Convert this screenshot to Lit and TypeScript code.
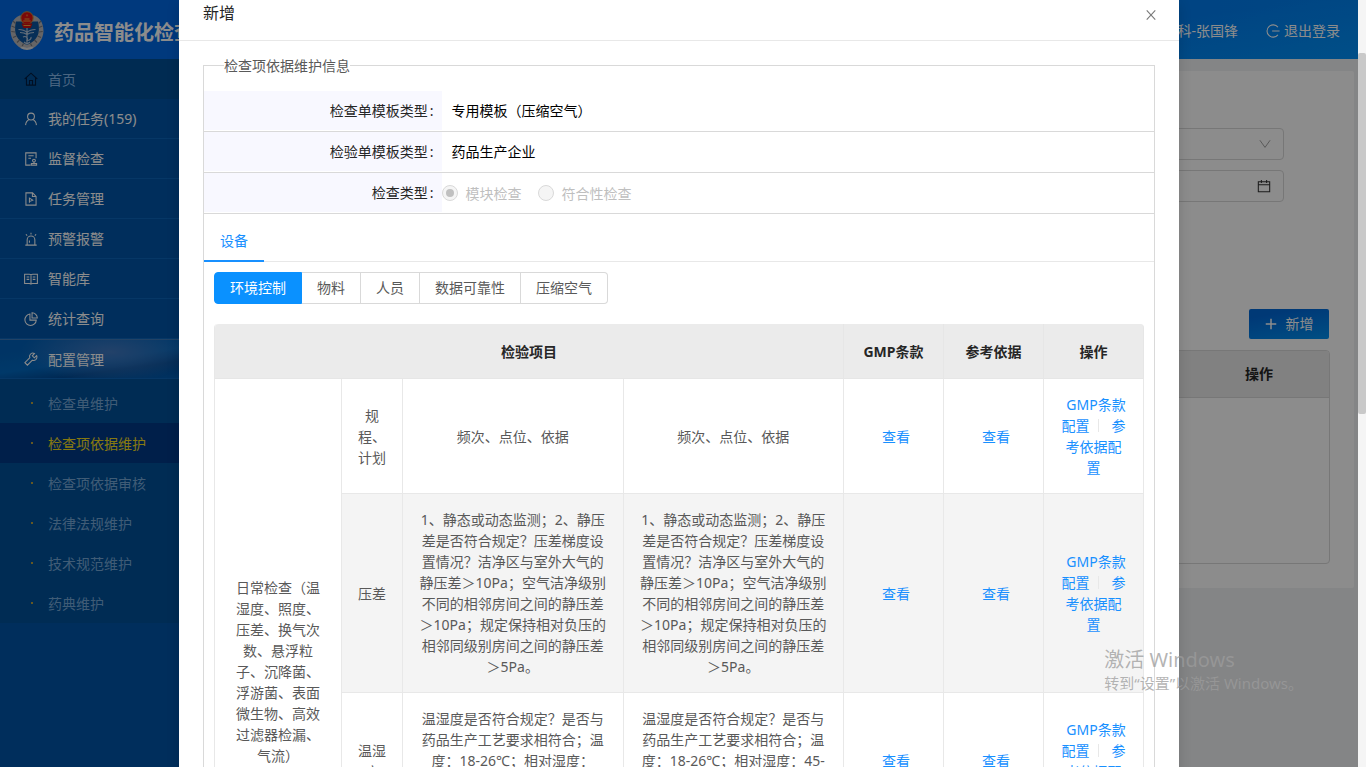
import { LitElement, html, css, svg, nothing } from "lit";
import { customElement, property, state } from "lit/decorators.js";
import { classMap } from "lit/directives/class-map.js";

const ICONS: Record<string, unknown> = {
  home: svg`<path d="M.8 8 8 1.400 15.200 8M2.800 6.500V15h10.400V6.500M6.300 14.800V9.600h3.400v5.200"/>`,
  user: svg`<circle cx="8" cy="5.200" r="3.900"/><path d="M1.800 15c.3-3.400 2-5.500 4.200-6.400M14.200 15c-.3-3.400-2-5.500-4.200-6.400"/>`,
  audit: svg`<path d="M7.500 15H2V1h11.800V7M5 4.300h6M5 7.200h3M8.400 15h6v-1.900h-6z"/><circle cx="11.400" cy="9.800" r="1.600"/><path d="M11.400 11.400v1.600"/>`,
  pdf: svg`<path d="M2.200 1h7.600l4 4v10H2.200zM9.600 1.200v4h4M6.200 12.400V7l3.800 2.300-3.800 1.700"/>`,
  alert: svg`<path d="M1.500 15h13M3.600 14.800V9a4.400 4.400 0 0 1 8.800 0v5.800M6.200 12.400V9.800M8 .8v2M2.200 2.600l1.400 1.600M13.800 2.600l-1.400 1.600"/>`,
  book: svg`<path d="M.7 2.600h5.400c1.100 0 1.900.6 1.900 1.200 0-.6.8-1.200 1.900-1.200h5.400v10.600H9.900c-1.100 0-1.900.4-1.900 1 0-.6-.8-1-1.900-1H.7zM8 4v9.800M3 5.600h3M3 8.400h3M10 5.600h3M10 8.400h3"/>`,
  pie: svg`<path d="M6.800 2.400A6.500 6.500 0 1 0 14 9.300H6.800z"/><path d="M9.200.9v6h6a6.100 6.100 0 0 0-6-6z"/>`,
  tool: svg`<path d="M14.400 4.100 11.800 6.600 9.500 4.300 12 1.700C10.300.8 8.200 1.200 7.100 2.800c-.8 1.100-.9 2.500-.4 3.700L1 12.200l2.900 2.900 5.700-5.700c1.400.5 2.800.2 3.900-.8 1.200-1.200 1.600-3 .9-4.500z"/>`,
  logout: svg`<path d="M13.600 3.600A7 7 0 1 0 13.600 12.400M7 8h8.500"/>`,
  calendar: svg`<path d="M1.500 3.200h13v11.300h-13zM1.500 6.600h13M5 1v3.600M11 1v3.600"/>`,
  down: svg`<path d="m1.200 3 6.800 9.500L14.800 3"/>`,
  close: svg`<path stroke-width="1.500" d="m2.300 1.800 11.400 12.400M13.700 1.800 2.300 14.200"/>`,
  plus: svg`<path stroke-width="2" d="M8 1v14M1 8h14"/>`,
};

const icon = (name: string, size = 14) => html`<svg
  class="icon"
  width=${size}
  height=${size}
  viewBox="0 0 16 16"
  aria-hidden="true"
>${ICONS[name]}</svg>`;

const shared = css`
  * { box-sizing: border-box; }
  button { font: inherit; cursor: pointer; }
  a { text-decoration: none; }
  .icon { fill: none; stroke: currentColor; stroke-width: 1.2; flex: none; display: block; }
`;

const MENU = [
  { icon: "user", text: "我的任务(159)" },
  { icon: "audit", text: "监督检查" },
  { icon: "pdf", text: "任务管理" },
  { icon: "alert", text: "预警报警" },
  { icon: "book", text: "智能库" },
  { icon: "pie", text: "统计查询" },
  { icon: "tool", text: "配置管理", open: true },
];

const SUBMENU = ["检查单维护", "检查项依据维护", "检查项依据审核", "法律法规维护", "技术规范维护", "药典维护"];

@customElement("side-menu")
class SideMenu extends LitElement {
  static styles = [shared, css`
    :host { display: block; background: #0055a8; color: #fff; }
    .item {
      display: flex; align-items: center; gap: 10px; height: 40px; padding: 0 24px;
      color: #fff; border-bottom: 1px solid #0b65ba;
    }
    .home { background: #004f96; color: #86b8ea; border-bottom: 0; }
    .home .icon { color: #001c40; }
    .open {
      border-top: 1px solid #3c78b8;
      background: radial-gradient(ellipse 90px 30px at 110px 12px, #4078c0, transparent),
        linear-gradient(172deg, #0060b8 20%, #0068c0 50%, #004b98 70%, #0060b8);
    }
    .sub { background: #00509a; padding-top: 4px; }
    .leaf { display: flex; align-items: center; height: 40px; padding-left: 31px; color: #76a8d8; gap: 15px; }
    .leaf::before { content: ""; width: 2px; height: 2px; background: #b8a040; }
    .current { background: #003a88; color: #f5dc20; }
  `];

  render() {
    return html`
      <nav>
        <a class="item home" href="#">${icon("home")}<span>首页</span></a>
        ${MENU.map((m) => html`
          <a class=${classMap({ item: true, open: !!m.open })} href="#">${icon(m.icon)}<span>${m.text}</span></a>
        `)}
        <div class="sub">
          ${SUBMENU.map((text, i) => html`<a class=${classMap({ leaf: true, current: i === 1 })} href="#">${text}</a>`)}
        </div>
      </nav>
    `;
  }
}

@customElement("brand-emblem")
class BrandEmblem extends LitElement {
  static styles = css`
    :host { display: block; flex: none; line-height: 0; }
  `;

  render() {
    return html`
      <svg width="34" height="40" viewBox="0 0 34 40" aria-hidden="true">
        <path d="M9.500 4.500C3 7.500.5 13 .5 20.500 1 29 6.500 35.500 13 38l4-1.200 4 1.200c6.500-2.500 12-9 12.500-17.500 0-7.500-2.500-13-9-16z" fill="#b9b9bc"/>
        <path d="M6 10.500C5 14.500 4.700 18.500 5.600 22.500 7.200 28 11.500 31.800 17 34c5.500-2.200 9.800-6 11.400-11.500.9-4 .6-8-.4-12z" fill="#0b559f"/>
        <path d="M3 10 5.500 12.500M1.500 15l3.500 1.500M1.300 20.500l3.700.5M3 26.500l3.400-1.500M7 31.500l2.600-2.500M12 35.500l1.500-3M31 10l-2.500 2.500M32.500 15 29 16.500M32.700 20.500l-3.700.5M31 26.500l-3.400-1.500M27 31.500 24.400 29M22 35.500l-1.500-3" stroke="#77797f" stroke-width="1.200"/>
        <path d="M17 16v16.500M8.500 18.500c3 0 6.500 1 8.500 3 2-2 5.500-3 8.500-3M10 21.500c2.500 0 5 .5 7 2 2-1.500 4.500-2 7-2M13 26c3-1.500 5.500 1 4 3.500 2.500 0 4.500-1.500 4-3.500M14 31l3 2 3-2" fill="none" stroke="#b4c6dc" stroke-width="1.200"/>
        <path d="M12 35.500c3 1.500 7 1.500 10 0l1.500 1.500c-4 2.600-9 2.600-13 0z" fill="#dedede"/>
        <ellipse cx="17" cy="7" rx="6.200" ry="6.300" fill="#e01210" stroke="#c89038"/>
        <path d="M11.500 12.500h11l-1.800 4.500h-7.400z" fill="#d0120f"/>
        <path d="M13.300 10h7.400M14.500 8h5M17 3.500v1.800M13.500 14.500h7" stroke="#f2a53c"/>
      </svg>
    `;
  }
}

const CHECK_PRESSURE =
  "1、静态或动态监测；2、静压差是否符合规定？压差梯度设置情况？洁净区与室外大气的静压差＞10Pa；空气洁净级别不同的相邻房间之间的静压差＞10Pa；规定保持相对负压的相邻同级别房间之间的静压差＞5Pa。";
const CHECK_CLIMATE = "温湿度是否符合规定？是否与药品生产工艺要求相符合；温度：18-26℃；相对湿度：";
const CHECK_CLIMATE_END = "65%；特殊要求的房间按照工艺规定执行。";
const CHECK_LIGHT = "照度是否符合规定？主要工作室的照度是否达到要求；对照度有特殊要求的生产区域是否设置局部照明；是否设置应急照明设施。";

const ROWS: { name: string; left: unknown; right: unknown }[] = [
  { name: "规程、计划", left: "频次、点位、依据", right: "频次、点位、依据" },
  { name: "压差", left: CHECK_PRESSURE, right: CHECK_PRESSURE },
  {
    name: "温湿度",
    left: html`${CHECK_CLIMATE}<br>45-${CHECK_CLIMATE_END}`,
    right: html`${CHECK_CLIMATE}45-<br>${CHECK_CLIMATE_END}`,
  },
  { name: "照度", left: CHECK_LIGHT, right: CHECK_LIGHT },
];

@customElement("item-table")
class ItemTable extends LitElement {
  static styles = [shared, css`
    :host { display: block; }
    table {
      width: 100%; table-layout: fixed; border-collapse: separate; border-spacing: 0;
      border-left: 1px solid #e8e8e8; border-radius: 4px 4px 0 0; text-align: center; color: #595959;
    }
    .c-group { width: 127px; }
    .c-name { width: 61px; }
    .c-act { width: 100px; }
    th, td { border-right: 1px solid #e8e8e8; border-bottom: 1px solid #e8e8e8; padding: 15px 16px; }
    th {
      height: 55px; background: #ebebeb; color: #262626; font-weight: 700; padding: 0 16px;
      border-color: #e6e6e6;
    }
    th:first-child { border-top-left-radius: 4px; }
    th:last-child { border-top-right-radius: 4px; }
    .alt { background: #f4f4f4; }
    .link { color: #1890ff; margin-left: 5px; }
    .split { display: inline-block; width: 1px; height: 13px; margin: 0 8px; background: #e8e8e8; vertical-align: -1px; }
  `];

  render() {
    return html`
      <table>
        <colgroup>
          <col class="c-group"><col class="c-name"><col><col>
          <col class="c-act"><col class="c-act"><col class="c-act">
        </colgroup>
        <thead>
          <tr><th colspan="4">检验项目</th><th>GMP条款</th><th>参考依据</th><th>操作</th></tr>
        </thead>
        <tbody>
          ${ROWS.map((r, i) => {
            const cell = classMap({ alt: i % 2 === 1 });
            return html`
              <tr>
                ${i === 0
                  ? html`<td rowspan=${ROWS.length}>日常检查（温湿度、照度、压差、换气次数、悬浮粒子、沉降菌、浮游菌、表面微生物、高效过滤器检漏、气流）</td>`
                  : nothing}
                <td class=${cell}>${r.name}</td>
                <td class=${cell}>${r.left}</td>
                <td class=${cell}>${r.right}</td>
                <td class=${cell}><a class="link" href="#">查看</a></td>
                <td class=${cell}><a class="link" href="#">查看</a></td>
                <td class=${cell}><a class="link" href="#">GMP条款配置</a><span class="split"></span><a class="link" href="#">参考依据配置</a></td>
              </tr>
            `;
          })}
        </tbody>
      </table>
    `;
  }
}

@customElement("item-dialog")
class ItemDialog extends LitElement {
  @state() private section = 0;

  static styles = [shared, css`
    :host {
      display: block; background: #fff; color: #595959;
      box-shadow: 0 4px 12px rgba(0, 0, 0, 0.15);
    }
    header {
      display: flex; align-items: flex-start; justify-content: space-between;
      padding: 2px 22px 16px 24px; border-bottom: 1px solid #e8e8e8;
    }
    h2 { margin: 0; font-size: 16px; line-height: 22px; font-weight: 400; color: #262626; }
    .close { border: 0; background: none; padding: 7px 0 0; color: #7a7a7a; }
    .body { padding: 14px 24px 24px; }
    fieldset { margin: 0; padding: 0; border: 1px solid #d9d9d9; min-width: 0; }
    legend { margin: 0 0 15px 20px; padding: 0; line-height: 21px; }
    .row { display: flex; height: 41px; border-bottom: 1px solid #d9d9d9; align-items: stretch; }
    .label {
      width: 25%; background: #f8f8ff; color: #262626; display: flex; align-items: center;
      justify-content: flex-end; padding-right: 8px; gap: 2px; margin-bottom: 1px;
    }
    .value { display: flex; align-items: center; padding-left: 10px; color: #000; margin-bottom: 1px; }
    .radios { display: flex; align-items: center; gap: 16px; color: #bfbfbf; }
    .radio { display: flex; align-items: center; gap: 8px; }
    input {
      appearance: none; width: 16px; height: 16px; margin: 0; border: 1px solid #d9d9d9;
      border-radius: 50%; background: #f5f5f5; display: grid; place-items: center;
    }
    input:checked::before { content: ""; width: 8px; height: 8px; border-radius: 50%; background: #c0c0c0; }
    .tabs { display: flex; height: 48px; border-bottom: 1px solid #e8e8e8; }
    .tab {
      border: 0; border-bottom: 2px solid #1890ff; background: none; color: #1890ff;
      padding: 6px 16px 0; height: 48px;
    }
    .pane { padding: 10px; }
    .segments { display: flex; margin-bottom: 20px; }
    .segment {
      height: 32px; padding: 0 15px 2px; border: 1px solid #d9d9d9; border-left-width: 0;
      background: #fff; color: #595959;
    }
    .segment:first-child { border-left-width: 1px; border-radius: 4px 0 0 4px; }
    .segment:last-child { border-radius: 0 4px 4px 0; }
    .active { background: #0a91ff; border-color: #0a91ff; color: #fff; }
  `];

  render() {
    const sections = ["环境控制", "物料", "人员", "数据可靠性", "压缩空气"];
    return html`
      <header>
        <h2>新增</h2>
        <button class="close" aria-label="关闭">${icon("close", 12)}</button>
      </header>
      <div class="body">
        <fieldset>
          <legend>检查项依据维护信息</legend>
          <div class="row"><span class="label">检查单模板类型<span>:</span></span><span class="value">专用模板（压缩空气）</span></div>
          <div class="row"><span class="label">检验单模板类型<span>:</span></span><span class="value">药品生产企业</span></div>
          <div class="row">
            <span class="label" id="kind">检查类型<span>:</span></span>
            <div class="radios" role="radiogroup" aria-labelledby="kind">
              <label class="radio"><input type="radio" name="kind" checked disabled>模块检查</label>
              <label class="radio"><input type="radio" name="kind" disabled>符合性检查</label>
            </div>
          </div>
          <div class="tabs" role="tablist"><button class="tab" role="tab" aria-selected="true">设备</button></div>
          <div class="pane">
            <div class="segments">
              ${sections.map((s, i) => html`
                <button
                  class=${classMap({ segment: true, active: i === this.section })}
                  @click=${() => (this.section = i)}
                >${s}</button>
              `)}
            </div>
            <item-table></item-table>
          </div>
        </fieldset>
      </div>
    `;
  }
}

@customElement("app-root")
class AppRoot extends LitElement {
  @property() userName = "药品检查科-张国锋";

  static styles = [shared, css`
    :host {
      display: flex; height: 100vh; overflow: hidden; position: relative;
      font: 14px/21px "Noto Sans", "Noto Sans CJK SC", sans-serif; text-spacing-trim: space-all;
    }
    .page { flex: 1; min-width: 0; display: flex; flex-direction: column; background: #f0f2f5; }
    .top {
      display: flex; align-items: center; gap: 10px; height: 59px; flex: none; padding: 2px 18px 0 10px; color: #fff;
      background: linear-gradient(170deg, transparent 60%, rgba(0, 160, 255, 0.5)) right / 50% 100% no-repeat,
        linear-gradient(90deg, #0068e4 15%, #0080f0);
    }
    .brand { margin: 0; font-size: 20px; line-height: 28px; font-weight: 700; flex: 1; padding-top: 4px; }
    .logout { display: flex; align-items: center; gap: 4px; color: #fff; border: 0; background: none; padding: 0; margin-left: 18px; }
    .main { flex: 1; min-height: 0; display: flex; }
    side-menu { width: 200px; flex: none; }
    .content { flex: 1; min-width: 0; padding: 12px 4px 0 12px; }
    .panel {
      background: #fff; border-radius: 2px; padding: 57px 24px 24px;
      display: flex; flex-direction: column;
    }
    .filters { display: grid; gap: 10px; justify-items: end; padding-right: 46px; margin-bottom: 107px; }
    .field {
      width: 300px; height: 32px; border: 1px solid #d9d9d9; border-radius: 4px; background: #fff;
      display: flex; align-items: center; padding-right: 12px;
    }
    .field select, .field input {
      flex: 1; min-width: 0; border: 0; background: none; appearance: none; font: inherit; padding: 0 11px; color: #595959;
    }
    .arrow { color: #999; display: flex; }
    .date { color: #333; display: flex; }
    .add {
      align-self: flex-end; display: flex; align-items: center; justify-content: center; gap: 9px;
      width: 80px; height: 30px; border: 0; border-radius: 2px; color: #fff; margin: 0 1px 11px 0;
      background: linear-gradient(170deg, #0068d8 20%, #0090f0); padding: 0 0 1px;
    }
    .list { height: 214px; border: 1px solid #d9d9d9; border-radius: 4px; overflow: hidden; }
    .list table { width: 100%; border-collapse: collapse; }
    .list th { background: #ebebeb; height: 46px; padding: 0; color: #262626; border-bottom: 1px solid #d9d9d9; }
    .list .c-op { width: 140px; }
    .mask {
      position: absolute; inset: 0 8px 0 0; background: rgba(0, 0, 0, 0.45);
      overflow: hidden; display: flex; justify-content: center; align-items: flex-start;
    }
    item-dialog { width: 1000px; max-width: 100%; }
    .scroll { width: 8px; flex: none; background: #f5f5f5; padding-top: 53px; }
    .thumb { height: 361px; border-radius: 2px; background: #c9c9c9; }
    .notice { position: absolute; right: 63px; bottom: 73px; color: rgba(156, 156, 156, 0.76); pointer-events: none; }
    .notice-title { margin: 0; font-size: 20px; line-height: 26px; }
    .notice-text { margin: 0; font-size: 15px; line-height: 21px; }
  `];

  render() {
    return html`
      <div class="page">
        <div class="top">
          <brand-emblem></brand-emblem>
          <h1 class="brand">药品智能化检查系统</h1>
          <span>${this.userName}</span>
          <button class="logout">${icon("logout")}退出登录</button>
        </div>
        <div class="main">
          <side-menu></side-menu>
          <div class="content">
            <div class="panel">
              <div class="filters">
                <div class="field">
                  <select aria-label="类型"><option></option></select>
                  <span class="arrow">${icon("down", 12)}</span>
                </div>
                <div class="field">
                  <input type="text" aria-label="日期">
                  <span class="date">${icon("calendar")}</span>
                </div>
              </div>
              <button class="add">${icon("plus", 12)}新增</button>
              <div class="list">
                <table>
                  <thead><tr><th></th><th class="c-op">操作</th></tr></thead>
                </table>
              </div>
            </div>
          </div>
        </div>
      </div>
      <div class="scroll"><div class="thumb"></div></div>
      <div class="mask"><item-dialog role="dialog" aria-label="新增"></item-dialog></div>
      <div class="notice">
        <p class="notice-title">激活 Windows</p>
        <p class="notice-text">转到“设置”以激活 Windows。</p>
      </div>
    `;
  }
}
